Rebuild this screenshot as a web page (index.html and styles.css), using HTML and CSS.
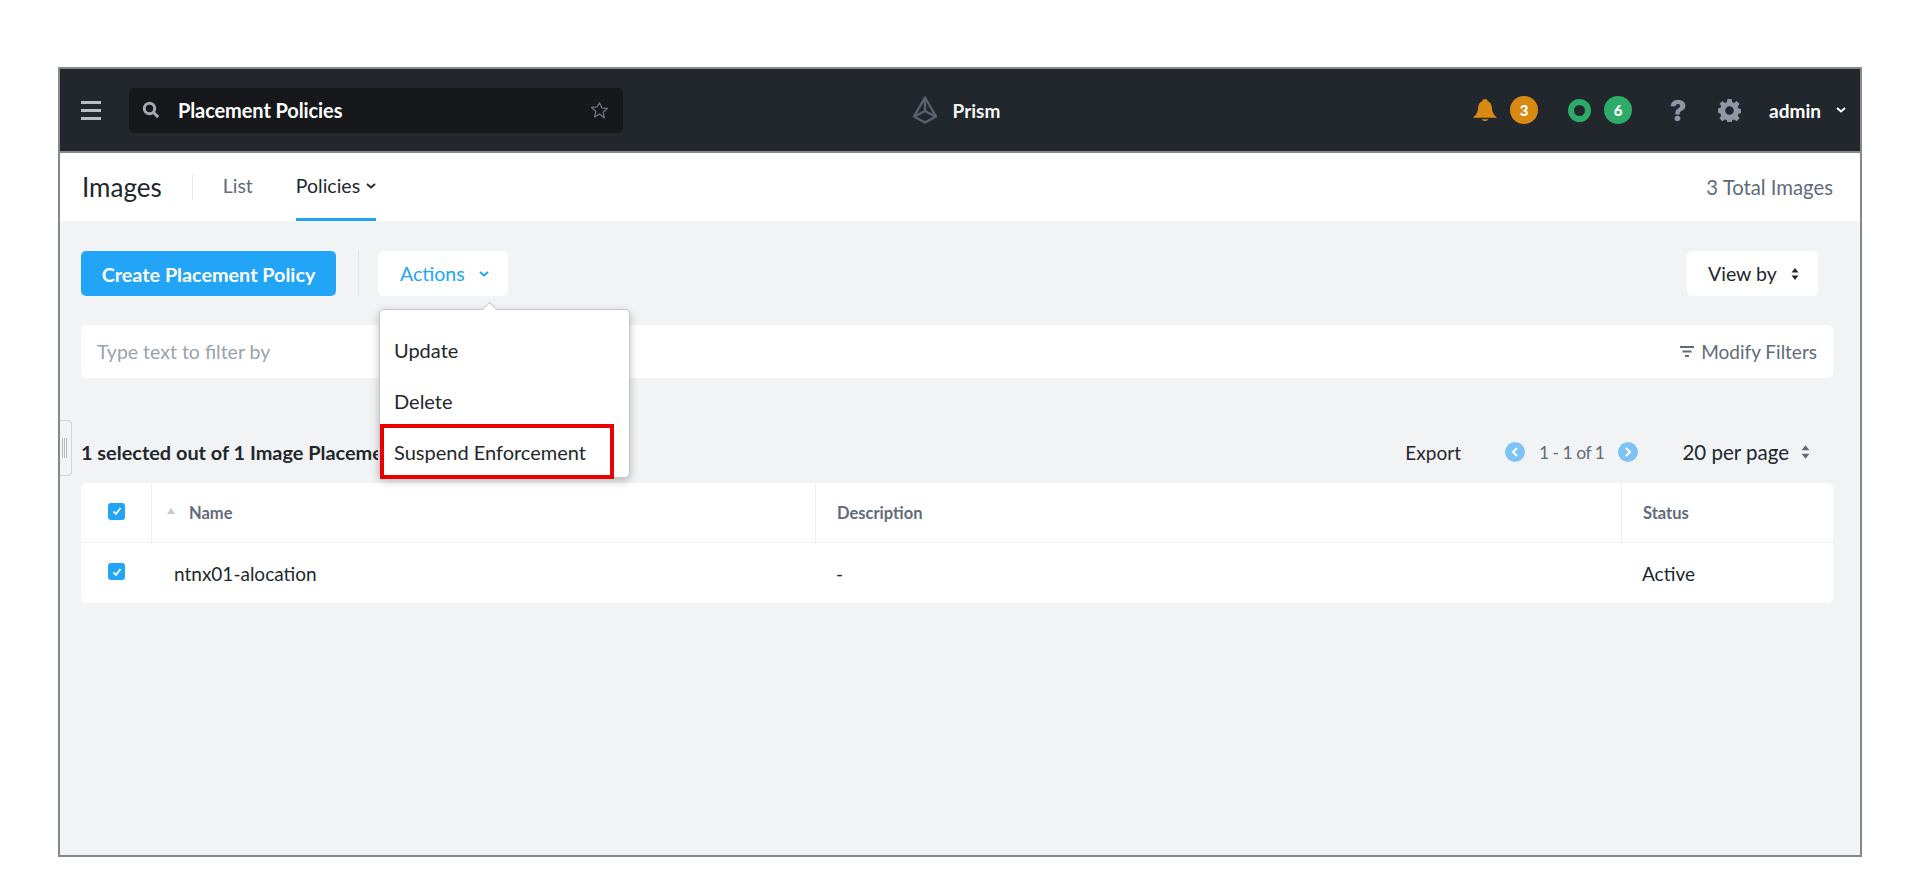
FILE: index.html
```html
<!DOCTYPE html>
<html lang="en">
<head>
    <meta charset="UTF-8">
    <title>Images - Placement Policies</title>
    <link rel="stylesheet" href="styles.css">
</head>
<body>

    <div class="frame">
        <!-- Top Bar -->
        <div class="topbar">
            <div class="topbar-left">
                <div class="hamburger">
                    <div class="line"></div>
                    <div class="line"></div>
                    <div class="line"></div>
                </div>
                <div class="search-box">
                    <svg class="search-icon" viewBox="0 0 18 18"><circle cx="7.5" cy="7.5" r="5.2" fill="none" stroke="#a3a9b3" stroke-width="3"/><path d="M11.5 11.5l4.600 4.600" stroke="#a3a9b3" stroke-width="3"/></svg>
                    <span class="search-text">Placement Policies</span>
                    <svg class="star-icon" viewBox="0 0 18 18"><path d="M9 1.600l2.200 4.900 5.300.6-4 3.600 1.100 5.300L9 12.300l-4.600 2.700 1.100-5.300-4-3.600 5.300-.6z" fill="none" stroke="#6f7682" stroke-width="1.200" stroke-linejoin="round"/></svg>
                </div>
            </div>
            <div class="brand">
                <svg class="brand-icon" viewBox="0 0 26 28"><path d="M13 1.500L2 20.500l11 6 11-6zM13 1.500v13.500M2.500 20.500L13 15l10.500 5.500" fill="none" stroke="#59626f" stroke-width="2.400" stroke-linejoin="round"/></svg>
                <span>Prism</span>
            </div>
            <div class="topbar-right">
                <svg class="bell-icon" viewBox="0 0 26 24"><path d="M13 0c1.700 0 2.800 1.100 3.100 2.500C19 3.700 20.300 6.400 20.500 9.500c.3 4 1.200 7 5 10V20.500H.5V19.500c3.800-3 4.700-6 5-10C5.700 6.400 7 3.700 9.900 2.500 10.200 1.100 11.300 0 13 0zM9.500 22h7c-.5 1.300-2 2-3.500 2s-3-.7-3.500-2z" fill="#d98a13"/></svg>
                <span class="badge badge-orange">3</span>
                <span class="ring"></span>
                <span class="badge badge-green">6</span>
                <span class="help">?</span>
                <svg class="gear-icon" viewBox="0 0 24 24"><path fill="#9098a5" fill-rule="evenodd" d="M9.800 0h4.400l.6 3.300 1.900.8L19.500 2.200l3 3-1.900 2.800.8 1.900 2.600.6v4.400l-2.600.6-.8 1.900 1.900 2.800-3 3-2.800-1.900-1.900.8-.6 2.900H9.800l-.6-2.900-1.900-.8-2.800 1.900-3-3 1.900-2.800-.8-1.900L0 14V9.800l2.600-.6.8-1.900L1.500 5.200l3-3 2.800 1.900 1.900-.8zM12 7.500a4.500 4.500 0 1 0 0 9 4.500 4.500 0 0 0 0-9z"/></svg>
                <span class="user">admin</span>
                <svg class="chev chev-white" viewBox="0 0 10 6"><path d="M1 1l4 3.500L9 1" fill="none" stroke="#fff" stroke-width="2"/></svg>
            </div>
        </div>

        <!-- Sub Navigation -->
        <div class="subnav">
            <div class="subnav-title">Images</div>
            <div class="subnav-sep"></div>
            <a class="subnav-link" href="#">List</a>
            <a class="subnav-link active" href="#">Policies
                <svg class="chev" viewBox="0 0 10 6"><path d="M1 1l4 3.500L9 1" fill="none" stroke="#22272e" stroke-width="1.800"/></svg>
            </a>
            <div class="total">3 Total Images</div>
        </div>

        <!-- Main Content -->
        <div class="content">
            <div class="resize-tab"><span></span><span></span><span></span></div>

            <div class="toolbar">
                <button class="btn btn-primary">Create Placement Policy</button>
                <div class="toolbar-sep"></div>
                <div class="actions-wrap">
                    <button class="btn btn-white btn-actions">Actions
                        <svg class="chev" viewBox="0 0 10 6"><path d="M1 1l4 3.500L9 1" fill="none" stroke="#22a5f7" stroke-width="2"/></svg>
                    </button>
                    <div class="dropdown">
                        <div class="dropdown-item">Update</div>
                        <div class="dropdown-item">Delete</div>
                        <div class="dropdown-item highlighted">Suspend Enforcement</div>
                    </div>
                </div>
                <button class="btn btn-white btn-view">View by
                    <svg class="updown" viewBox="0 0 8 12"><path d="M4 0l3.500 4.500h-7zM4 12L.5 7.500h7z" fill="#22272e"/></svg>
                </button>
            </div>

            <div class="filter-bar">
                <span class="filter-hint">Type text to filter by</span>
                <span class="filter-link">
                    <svg class="filter-icon" viewBox="0 0 14 12"><path d="M0 1h14M2.500 5.500h9M5 10h4" stroke="#5f6b7a" stroke-width="2"/></svg>
                    Modify Filters
                </span>
            </div>

            <div class="table-head">
                <div class="selected-count">1 selected out of 1 Image Placement Policies</div>
                <div class="table-tools">
                    <span class="export">Export</span>
                    <span class="pager">
                        <span class="pager-btn"><svg viewBox="0 0 8 10"><path d="M6 1L2 5l4 4" fill="none" stroke="#fff" stroke-width="2"/></svg></span>
                        <span class="pager-text">1 - 1 of 1</span>
                        <span class="pager-btn"><svg viewBox="0 0 8 10"><path d="M2 1l4 4-4 4" fill="none" stroke="#fff" stroke-width="2"/></svg></span>
                    </span>
                    <span class="per-page">20 per page
                        <svg class="updown updown-lg" viewBox="0 0 8 12"><path d="M4 0l3.500 4.500h-7zM4 12L.5 7.500h7z" fill="#5f6b7a"/></svg>
                    </span>
                </div>
            </div>

            <div class="table">
                <div class="row row-header">
                    <div class="cell cell-check"><span class="checkbox"><svg viewBox="0 0 12 12"><path d="M2.500 6.500l2.500 2.500 4.500-6" fill="none" stroke="#fff" stroke-width="1.800"/></svg></span></div>
                    <div class="cell cell-name"><span class="sort-arrow"></span>Name</div>
                    <div class="cell cell-desc">Description</div>
                    <div class="cell cell-status">Status</div>
                </div>
                <div class="row">
                    <div class="cell cell-check"><span class="checkbox"><svg viewBox="0 0 12 12"><path d="M2.500 6.500l2.500 2.500 4.500-6" fill="none" stroke="#fff" stroke-width="1.800"/></svg></span></div>
                    <div class="cell cell-name">ntnx01-alocation</div>
                    <div class="cell cell-desc">-</div>
                    <div class="cell cell-status">Active</div>
                </div>
            </div>
        </div>
    </div>

</body>
</html>
```

FILE: styles.css
```css
/* General Reset */
* {
    box-sizing: border-box;
    margin: 0;
    padding: 0;
    font-family: Lato, "Open Sans", sans-serif;
}

body {
    background: #fff;
    height: 891px;
    overflow: hidden;
    padding: 67px 58px 0;
}

/* Outer Frame */
.frame {
    width: 1804px;
    height: 790px;
    border: 2px solid #85888d;
    display: flex;
    flex-direction: column;
    background: #f2f3f5;
}

/* Top Bar */
.topbar {
    height: 84px;
    flex-shrink: 0;
    background: #22272e;
    border-bottom: 2px solid #85888d;
    display: grid;
    grid-template-columns: 1fr auto 1fr;
    align-items: center;
}

.topbar-left {
    display: flex;
    align-items: center;
    padding-left: 21px;
}

.hamburger {
    width: 20px;
    margin-right: 28px;
}

.line {
    height: 3px;
    background: #b9bdc4;
    margin: 5px 0;
}

.search-box {
    width: 494px;
    height: 45px;
    background: #16181c;
    border-radius: 5px;
    display: flex;
    align-items: center;
    padding: 0 14px 0 13px;
}

.search-icon {
    width: 18px;
    height: 18px;
}

.search-text {
    color: #fff;
    font-size: 20px;
    font-weight: 700;
    letter-spacing: -0.1px;
    margin-left: 18px;
    flex-grow: 1;
}

.star-icon {
    width: 19px;
    height: 19px;
}

.brand {
    display: flex;
    align-items: center;
    color: #f4f5f6;
    font-size: 19px;
    font-weight: 700;
    margin-right: 8px;
}

.brand-icon {
    width: 26px;
    height: 28px;
    margin-right: 15px;
}

.topbar-right {
    display: flex;
    align-items: center;
    justify-content: flex-end;
    padding-right: 14px;
}

.bell-icon {
    width: 24px;
    height: 24px;
}

.badge {
    width: 28px;
    height: 28px;
    border-radius: 50%;
    color: #fff;
    font-size: 15px;
    font-weight: 900;
    display: flex;
    align-items: center;
    justify-content: center;
}

.badge-orange {
    background: #d98a13;
    margin-left: 13px;
}

.badge-green {
    background: #2cab69;
    margin-left: 13px;
}

.ring {
    width: 23px;
    height: 23px;
    border: 6px solid #2cab69;
    border-radius: 50%;
    margin-left: 30px;
}

.help {
    font-family: Inter, sans-serif;
    color: #9098a5;
    font-size: 29px;
    font-weight: 800;
    line-height: 1;
    width: 20px;
    text-align: center;
    margin-left: 36px;
}

.gear-icon {
    width: 23px;
    height: 23px;
    margin-left: 30px;
}

.user {
    color: #fff;
    font-size: 19px;
    font-weight: 700;
    margin-left: 28px;
}

.chev {
    width: 10px;
    height: 6px;
}

.chev-white {
    margin-left: 15px;
}

/* Sub Navigation */
.subnav {
    height: 68px;
    flex-shrink: 0;
    background: #fff;
    display: flex;
    align-items: center;
    padding: 0 27px 0 22px;
}

.subnav-title {
    font-size: 26px;
    color: #22272e;
}

.subnav-sep {
    width: 1px;
    height: 26px;
    background: #e8eaed;
    margin: 0 30px;
}

.subnav-link {
    height: 68px;
    display: flex;
    align-items: center;
    gap: 6px;
    font-size: 19.5px;
    color: #5f6b7a;
    text-decoration: none;
    margin-right: 43px;
    border-bottom: 3px solid transparent;
}

.subnav-link.active {
    color: #22272e;
    border-bottom-color: #22a5f7;
}

.total {
    margin-left: auto;
    font-size: 20.3px;
    color: #5f6b7a;
}

/* Main Content */
.content {
    flex-grow: 1;
    position: relative;
    padding: 30px 27px 0 21px;
}

.resize-tab {
    position: absolute;
    left: 0;
    top: 199px;
    width: 12px;
    height: 56px;
    background: #f2f3f5;
    border: 1px solid #d3d6db;
    border-left: none;
    border-radius: 0 4px 4px 0;
    display: flex;
    gap: 1px;
    align-items: center;
    padding-left: 2px;
}

.resize-tab span {
    width: 1px;
    height: 20px;
    background: #b9bec5;
}

/* Toolbar */
.toolbar {
    display: flex;
    align-items: center;
    height: 45px;
    padding-right: 15px;
}

.btn {
    height: 45px;
    border: none;
    border-radius: 5px;
    font-size: 19.5px;
    display: flex;
    align-items: center;
}

.btn-primary {
    width: 255px;
    justify-content: center;
    background: #22a5f7;
    color: #fff;
    font-size: 19.8px;
    font-weight: 700;
}

.toolbar-sep {
    width: 1px;
    height: 45px;
    background: #e1e3e7;
    margin: 0 19px 0 22px;
}

.actions-wrap {
    position: relative;
}

.btn-white {
    background: #fff;
    color: #22272e;
}

.btn-actions {
    width: 130px;
    padding-left: 22px;
    gap: 14px;
    color: #22a5f7;
}

.btn-view {
    width: 131px;
    padding-left: 21px;
    gap: 14px;
    margin-left: auto;
}

.updown {
    width: 8px;
    height: 12px;
}

.updown-lg {
    width: 9px;
    height: 14px;
}

/* Actions Dropdown */
.dropdown {
    position: absolute;
    left: 1px;
    top: 58px;
    width: 251px;
    height: 169px;
    background: #fff;
    border: 1px solid #c5c9cf;
    border-radius: 5px;
    box-shadow: 0 3px 8px rgba(0, 0, 0, 0.25);
    padding-top: 14px;
    z-index: 2;
}

.dropdown::before {
    content: "";
    position: absolute;
    left: 104px;
    top: -6px;
    width: 10px;
    height: 10px;
    background: #fff;
    border-left: 1px solid #c5c9cf;
    border-top: 1px solid #c5c9cf;
    transform: rotate(45deg);
}

.dropdown-item {
    height: 51px;
    display: flex;
    align-items: center;
    padding-left: 14px;
    font-size: 20px;
    color: #22272e;
}

.dropdown-item.highlighted {
    width: 234px;
    height: 55px;
    margin-top: -2px;
    padding-left: 10px;
    border: 4px solid #e60000;
}

/* Filter Bar */
.filter-bar {
    height: 53px;
    margin-top: 29px;
    background: #fff;
    border-radius: 5px;
    display: flex;
    align-items: center;
    justify-content: space-between;
    padding: 0 16px;
    font-size: 19.5px;
}

.filter-hint {
    color: #9aa2ad;
}

.filter-link {
    color: #5f6b7a;
    font-size: 19px;
    display: flex;
    align-items: center;
    gap: 7px;
}

.filter-icon {
    width: 14px;
    height: 12px;
}

/* Table Header Tools */
.table-head {
    height: 105px;
    padding-top: 43px;
    display: flex;
    align-items: center;
    justify-content: space-between;
    font-size: 19px;
    color: #22272e;
}

/* Cut off where the open dropdown covers it */
.selected-count {
    width: 297px;
    font-size: 19.9px;
    font-weight: 700;
    white-space: nowrap;
    overflow: hidden;
}

.table-tools {
    display: flex;
    align-items: center;
}

.export {
    margin-right: 44px;
}

.pager {
    display: flex;
    align-items: center;
    color: #5f6b7a;
    margin-right: 44px;
}

.pager-btn {
    width: 20px;
    height: 20px;
    border-radius: 50%;
    background: #7cc4f5;
    display: flex;
    align-items: center;
    justify-content: center;
}

.pager-btn svg {
    width: 8px;
    height: 10px;
}

.pager-text {
    font-size: 17.5px;
    letter-spacing: -0.5px;
    margin: 0 14px;
}

.per-page {
    font-size: 20.5px;
    display: flex;
    align-items: center;
    gap: 12px;
    margin-right: 23px;
}

/* Table */
.table {
    background: #fff;
    border-radius: 5px;
}

.row {
    display: grid;
    grid-template-columns: 70px 664px 806px 1fr;
    height: 60px;
    align-items: stretch;
    font-size: 19px;
    color: #22272e;
}

.row-header {
    border-bottom: 1px solid #eceef1;
    font-size: 16.5px;
    font-weight: 700;
    color: #5f6b7a;
}

.cell {
    display: flex;
    align-items: center;
    padding-left: 21px;
}

.row-header .cell + .cell {
    border-left: 1px solid #eceef1;
}

.cell-check {
    padding: 0 0 3px 27px;
}

.checkbox {
    width: 17px;
    height: 17px;
    border-radius: 3px;
    background: #22a5f7;
    display: flex;
    align-items: center;
    justify-content: center;
}

.checkbox svg {
    width: 12px;
    height: 12px;
}

.row-header .cell-name {
    padding-left: 15px;
}

.cell-name {
    padding-left: 23px;
}

.sort-arrow {
    width: 0;
    height: 0;
    border-left: 4px solid transparent;
    border-right: 4px solid transparent;
    border-bottom: 6px solid #c5c9cf;
    margin-right: 14px;
    margin-bottom: 4px;
}
```
